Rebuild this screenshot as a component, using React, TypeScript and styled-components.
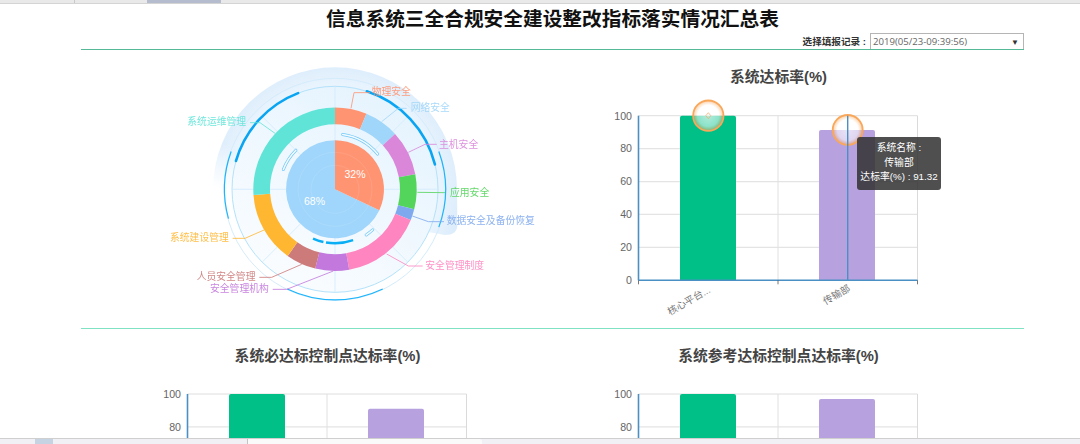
import React from 'react';
import styled, { createGlobalStyle } from 'styled-components';

const GlobalStyle = createGlobalStyle`
  html, body {
    margin: 0;
    padding: 0;
    background: #fff;
    font-family: "Liberation Sans", "Noto Sans CJK SC", sans-serif;
  }
`;

const Page = styled.div`
  height: 100vh;
  display: flex;
  flex-direction: column;
  overflow: hidden;
`;

const TopStrip = styled.div`
  flex: none;
  height: 3px;
  display: flex;
  background: #e9e9e9;
  border-bottom: 1px solid #d4d4d4;
  box-sizing: content-box;
`;

const StripTab = styled.div<{ $left: number; $width: number; $color: string }>`
  margin-left: ${(p) => p.$left}px;
  width: ${(p) => p.$width}px;
  background: ${(p) => p.$color};
`;

const Main = styled.div`
  flex: 1;
  min-height: 0;
  overflow: hidden;
  margin: -1px 56px 0 81px;
  display: flex;
  flex-direction: column;
`;

const Title = styled.h1`
  margin: 0;
  height: 30px;
  line-height: 33px;
  text-align: center;
  font-size: 19.7px;
  font-weight: bold;
  color: #111;
`;

const RecordBar = styled.div`
  flex: none;
  height: 16px;
  display: flex;
  justify-content: flex-end;
  align-items: center;
  gap: 4px;
  border-bottom: 1px solid #55b995;
`;

const RecordLabel = styled.span`
  font-size: 9.6px;
  font-weight: bold;
  color: #333;
`;

const RecordSelect = styled.div`
  box-sizing: border-box;
  width: 154px;
  height: 16px;
  display: flex;
  justify-content: space-between;
  align-items: center;
  padding: 0 4px 0 2px;
  border: 1px solid #b5b5b5;
  border-bottom: none;
  font-family: "Open Sans", sans-serif;
  font-size: 9.6px;
  color: #666;
`;

const Arrow = styled.span`
  font-size: 8px;
  color: #333;
`;

const Row = styled.div<{ $height?: number; $line?: boolean }>`
  flex: none;
  display: grid;
  grid-template-columns: 451px 451px;
  padding-left: 21px;
  ${(p) => (p.$height ? `height: ${p.$height}px;` : '')}
  ${(p) => (p.$line ? 'border-bottom: 1.5px solid #7fe3c3;' : '')}
`;

const Panel = styled.div`
  padding-top: 17px;
`;

const ChartTitle = styled.div`
  height: 20px;
  line-height: 20px;
  text-align: center;
  font-size: 14.8px;
  font-weight: bold;
  color: #444;
`;

const ChartBox = styled.div`
  position: relative;
  width: 451px;
`;

const ChartSvg = styled.svg`
  display: block;
`;

const PieSvg = styled.svg`
  display: block;
`;

const Tip = styled.div`
  position: absolute;
  left: 304px;
  top: 50px;
  width: 84px;
  height: 53px;
  box-sizing: border-box;
  padding-top: 4px;
  border-radius: 3px;
  background: rgba(50, 50, 50, 0.86);
  color: #fff;
  font-size: 9.8px;
  line-height: 14.5px;
  text-align: center;
  white-space: nowrap;
`;

const BottomStrip = styled.div`
  flex: none;
  height: 5px;
  display: flex;
  background: #f1f1f5;
  border-top: 1px solid #cfcfcf;
`;

const StripDivider = styled.div`
  margin-left: 194px;
  width: 1px;
  background: #c4c4c4;
`;

const StripPanel = styled.div`
  width: 234px;
  background: #fafafa;
  border-top-right-radius: 3px;
`;

// page coordinates, measured from the 3x crop of the ring
const zx = (x: number) => 150 + x / 3;
const zy = (y: number) => 55 + y / 3;

const CX = 335;
const CY = 189.3;

const polar = (r: number, deg: number) => {
  const a = ((deg - 90) * Math.PI) / 180;
  return [CX + r * Math.cos(a), CY + r * Math.sin(a)];
};

const arc = (r: number, from: number, to: number) => {
  const [x1, y1] = polar(r, from);
  const [x2, y2] = polar(r, to);
  return `M${x1} ${y1}A${r} ${r} 0 ${to - from > 180 ? 1 : 0} 1 ${x2} ${y2}`;
};

const ringPath = (r0: number, r1: number, from: number, to: number) => {
  const [x1, y1] = polar(r1, from);
  const [x2, y2] = polar(r1, to);
  const [x3, y3] = polar(r0, to);
  const [x4, y4] = polar(r0, from);
  const big = to - from > 180 ? 1 : 0;
  return `M${x1} ${y1}A${r1} ${r1} 0 ${big} 1 ${x2} ${y2}L${x3} ${y3}A${r0} ${r0} 0 ${big} 0 ${x4} ${y4}Z`;
};

const segments = [
  { from: 0, to: 22.6, color: '#ff9472' },
  { from: 22.6, to: 47.3, color: '#9fd6f9' },
  { from: 47.3, to: 79.4, color: '#da87da' },
  { from: 79.4, to: 104.2, color: '#53d45a' },
  { from: 104.2, to: 112, color: '#7fa9ee' },
  { from: 112, to: 170, color: '#ff85c0' },
  { from: 170, to: 194, color: '#c278dc' },
  { from: 194, to: 215.4, color: '#cd7a7a' },
  { from: 215.4, to: 266, color: '#ffb732' },
  { from: 266, to: 360, color: '#60e4d8' },
];

const labels = [
  { name: '物理安全', x: 665, y: 110, color: '#ff9472', line: [[603, 160], [612, 113], [660, 113]] },
  { name: '网络安全', x: 782, y: 157, color: '#9fd6f9', line: [[695, 200], [745, 160], [770, 160]] },
  { name: '主机安全', x: 867, y: 267, color: '#da87da', line: [[775, 292], [825, 268], [860, 268]] },
  { name: '应用安全', x: 900, y: 413, color: '#53d45a', line: [[802, 412], [885, 413]] },
  { name: '数据安全及备份恢复', x: 890, y: 497, color: '#7fa9ee', line: [[787, 483], [835, 500], [882, 500]] },
  { name: '安全管理制度', x: 826, y: 630, color: '#ff85c0', line: [[710, 597], [775, 633], [818, 633]] },
  { name: '安全管理机构', x: 180, y: 700, color: '#c278dc', line: [[550, 648], [410, 703], [368, 703]] },
  { name: '人员安全管理', x: 140, y: 664, color: '#cd7a7a', line: [[455, 628], [365, 667], [328, 667]] },
  { name: '系统建设管理', x: 60, y: 547, color: '#ffb732', line: [[342, 525], [285, 550], [248, 550]] },
  { name: '系统运维管理', x: 112, y: 200, color: '#60e4d8', line: [[375, 235], [330, 203], [300, 203]] },
];

const hollowArcs = [
  [8, 50.4],
  [291, 315],
  [137, 145.7],
];

const RingChart = () => {
  const [lx, ly] = polar(122, 270);
  const [rx, ry] = polar(122, 90);
  const glow =
    `M${lx} ${ly}A122 122 0 0 1 ${rx} ${ry}` +
    `L${zx(922)} ${zy(510)}Q${zx(922)} ${zy(540)} ${zx(885)} ${zy(540)}` +
    `L${zx(770)} ${zy(520)}L${CX} ${CY}Z`;

  return (
    <PieSvg width={451} height={278} viewBox="102 50 451 278">
      <defs>
        <radialGradient id="glowFill" gradientUnits="userSpaceOnUse" cx={CX} cy={CY} r={135}>
          <stop offset="0%" stopColor="#ffffff" />
          <stop offset="70%" stopColor="#eef7fe" />
          <stop offset="90%" stopColor="#dfeefc" />
          <stop offset="100%" stopColor="#d6e9fb" />
        </radialGradient>
        <linearGradient id="glowFade" gradientUnits="userSpaceOnUse" x1={zx(250)} y1={zy(420)} x2={zx(300)} y2={zy(300)}>
          <stop offset="0%" stopColor="#000" />
          <stop offset="100%" stopColor="#fff" />
        </linearGradient>
        <mask id="glowMask" maskUnits="userSpaceOnUse" x="102" y="50" width="451" height="278">
          <rect x="102" y="50" width="451" height="278" fill="url(#glowFade)" />
        </mask>
        <linearGradient id="discFill" x1="0.8" y1="0" x2="0.2" y2="1">
          <stop offset="0%" stopColor="#e4f3fe" />
          <stop offset="100%" stopColor="#fbfdff" />
        </linearGradient>
      </defs>

      <path d={glow} fill="url(#glowFill)" mask="url(#glowMask)" />
      <circle cx={CX} cy={CY} r={103} fill="url(#discFill)" stroke="#b4e2fb" strokeWidth={1} />
      <circle cx={CX} cy={CY} r={111} fill="none" stroke="#d4ecfb" strokeWidth={1} />

      {[0, 45, 90, 135, 180, 225, 270, 315].map((deg) => {
        const [x, y] = polar(103, deg);
        return <line key={deg} x1={CX} y1={CY} x2={x} y2={y} stroke="#d2ebfb" strokeWidth={0.8} />;
      })}

      <path d={arc(103, 18, 76)} fill="none" stroke="#0aa5f2" strokeWidth={2.6} strokeLinecap="round" />
      <path d={arc(103, 286, 339)} fill="none" stroke="#0aa5f2" strokeWidth={2.6} strokeLinecap="round" />
      <path d={arc(110.5, 70, 110)} fill="none" stroke="#1db4fb" strokeWidth={1.2} />
      <path d={arc(110.5, 254.6, 290)} fill="none" stroke="#1db4fb" strokeWidth={1.2} />
      <path d={arc(110.5, 154.4, 205.6)} fill="none" stroke="#1db4fb" strokeWidth={1.2} />

      {segments.map((s) => (
        <path key={s.from} d={ringPath(65, 81.7, s.from, s.to)} fill={s.color} />
      ))}

      {hollowArcs.map(([from, to]) => (
        <g key={from}>
          <path d={arc(55.3, from, to)} fill="none" stroke="#74c8f7" strokeWidth={3} strokeLinecap="round" />
          <path d={arc(55.3, from, to)} fill="none" stroke="#f2faff" strokeWidth={1.6} strokeLinecap="round" />
        </g>
      ))}
      <path d={arc(54, 192.4, 204)} fill="none" stroke="#0aaef5" strokeWidth={2.4} />
      <path d={arc(54, 160.4, 189.6)} fill="none" stroke="#0aaef5" strokeWidth={2.4} />

      <path d={ringPath(0.01, 49, 115.2, 360)} fill="#a0d6fb" />
      <path d={ringPath(0.01, 49, 0, 115.2)} fill="#ff9472" />
      <circle cx={CX} cy={CY} r={37} fill="none" stroke="#fff" strokeOpacity={0.1} />
      <circle cx={CX} cy={CY} r={24} fill="none" stroke="#fff" strokeOpacity={0.1} />

      <text x={355} y={178} fontSize={10.5} fill="#fff" textAnchor="middle">32%</text>
      <text x={314.5} y={205} fontSize={10.5} fill="#fff" textAnchor="middle">68%</text>

      {labels.map((l) => (
        <g key={l.name} opacity={0.9}>
          <polyline
            points={l.line.map(([x, y]) => `${zx(x)},${zy(y)}`).join(' ')}
            fill="none"
            stroke={l.color}
            strokeWidth={0.9}
          />
          <text x={zx(l.x)} y={zy(l.y) + 3.6} fontSize={9.8} fill={l.color}>
            {l.name}
          </text>
        </g>
      ))}
    </PieSvg>
  );
};

type Spot = { x: number; y: number; r: number };

type BarChartProps = {
  second: number;
  plotTop: number;
  // the lower charts run off the bottom of the window, so they only label what shows
  ticks?: number[];
  showNames?: boolean;
  spots?: Spot[];
  cursor?: number;
  children?: React.ReactNode;
};

const PLOT_LEFT = 85.5;
const PLOT_RIGHT = 364.5;
const PLOT_H = 164.6;

// bars and axes are drawn in chart-local pixels
const BarChart = ({
  second,
  plotTop,
  ticks = [0, 20, 40, 60, 80, 100],
  showNames = true,
  spots,
  cursor,
  children,
}: BarChartProps) => {
  const yOf = (v: number) => plotTop + PLOT_H * (1 - v / 100);
  const bottom = yOf(0);
  const bars = [
    { x: 127, v: 100, color: '#00c087' },
    { x: 266, v: second, color: '#b7a2df' },
  ];
  const midX = (PLOT_LEFT + PLOT_RIGHT) / 2;

  return (
    <ChartBox>
      <ChartSvg width={451} height={232}>
        <defs>
          <radialGradient id="spotFill">
            <stop offset="0%" stopColor="#fff" stopOpacity={0.7} />
            <stop offset="70%" stopColor="#fff" stopOpacity={0.55} />
            <stop offset="100%" stopColor="#f9a75a" stopOpacity={0.55} />
          </radialGradient>
        </defs>

        {[20, 40, 60, 80].map((v) => (
          <line key={v} x1={PLOT_LEFT} x2={PLOT_RIGHT} y1={yOf(v)} y2={yOf(v)} stroke="#e4e4e4" strokeWidth={1.2} />
        ))}
        <line x1={PLOT_LEFT} x2={PLOT_RIGHT} y1={yOf(100)} y2={yOf(100)} stroke="#dedede" />
        <line x1={midX} x2={midX} y1={yOf(100)} y2={bottom} stroke="#e0e0e0" />
        <line x1={PLOT_RIGHT} x2={PLOT_RIGHT} y1={yOf(100)} y2={bottom} stroke="#dadada" />

        {ticks.map((v) => (
          <text key={v} x={79} y={yOf(v) + 3.8} fontSize={10.6} fill="#666" textAnchor="end">
            {v}
          </text>
        ))}

        {bars.map((b) => (
          <path
            key={b.x}
            d={`M${b.x} ${bottom}V${yOf(b.v) + 2}Q${b.x} ${yOf(b.v)} ${b.x + 2} ${yOf(b.v)}H${b.x + 54}Q${b.x + 56} ${yOf(b.v)} ${b.x + 56} ${yOf(b.v) + 2}V${bottom}Z`}
            fill={b.color}
          />
        ))}

        <line x1={PLOT_LEFT} x2={PLOT_LEFT} y1={yOf(100)} y2={bottom} stroke="#4a90c4" strokeWidth={1.6} />
        <line x1={PLOT_LEFT} x2={PLOT_RIGHT} y1={bottom} y2={bottom} stroke="#4a90c4" strokeWidth={1.6} />
        {[PLOT_LEFT, midX, PLOT_RIGHT].map((x) => (
          <line key={x} x1={x} x2={x} y1={bottom} y2={bottom + 4} stroke="#555" strokeWidth={0.8} />
        ))}

        {showNames && (
          <>
            <text x={158} y={bottom + 11.5} fontSize={9.8} fill="#777" textAnchor="end" transform={`rotate(-30 158 ${bottom + 11.5})`}>
              核心平台...
            </text>
            <text x={298} y={bottom + 10} fontSize={9.8} fill="#777" textAnchor="end" transform={`rotate(-30 298 ${bottom + 10})`}>
              传输部
            </text>
          </>
        )}

        {spots?.map((s) => (
          <circle key={s.x} cx={s.x} cy={s.y} r={s.r} fill="url(#spotFill)" stroke="#f9a75a" strokeWidth={1.8} />
        ))}
        {spots && (
          <path d={`M155.3 ${yOf(100) - 3}l2.5 3l-2.5 3l-2.5-3Z`} fill="none" stroke="#f3a766" strokeWidth={0.7} />
        )}
        {cursor !== undefined && (
          <line x1={cursor} x2={cursor} y1={yOf(100)} y2={bottom} stroke="#4a90c4" strokeWidth={1.4} />
        )}
      </ChartSvg>
      {children}
    </ChartBox>
  );
};

export default function App() {
  return (
    <Page>
      <GlobalStyle />
      <TopStrip>
        <StripTab $left={74} $width={1} $color="#c9c9c9" />
        <StripTab $left={72} $width={74} $color="#b5bccd" />
      </TopStrip>
      <Main>
        <Title>信息系统三全合规安全建设整改指标落实情况汇总表</Title>
        <RecordBar>
          <RecordLabel>选择填报记录 :</RecordLabel>
          <RecordSelect>
            2019(05/23-09:39:56)
            <Arrow>▼</Arrow>
          </RecordSelect>
        </RecordBar>
        <Row $height={278} $line>
          <RingChart />
          <Panel>
            <ChartTitle>系统达标率(%)</ChartTitle>
            <BarChart
              second={91.32}
              plotTop={28.7}
              cursor={294.7}
              spots={[
                { x: 155.3, y: 28.7, r: 15.2 },
                { x: 294.7, y: 43, r: 15 },
              ]}
            >
              <Tip>
                系统名称 :
                <br />
                传输部
                <br />
                达标率(%) : 91.32
              </Tip>
            </BarChart>
          </Panel>
        </Row>
        <Row>
          <Panel>
            <ChartTitle>系统必达标控制点达标率(%)</ChartTitle>
            <BarChart second={91} plotTop={28} ticks={[80, 100]} showNames={false} />
          </Panel>
          <Panel>
            <ChartTitle>系统参考达标控制点达标率(%)</ChartTitle>
            <BarChart second={97} plotTop={28} ticks={[80, 100]} showNames={false} />
          </Panel>
        </Row>
      </Main>
      <BottomStrip>
        <StripTab $left={35} $width={18} $color="#c5d3e3" />
        <StripDivider />
        <StripPanel />
      </BottomStrip>
    </Page>
  );
}
